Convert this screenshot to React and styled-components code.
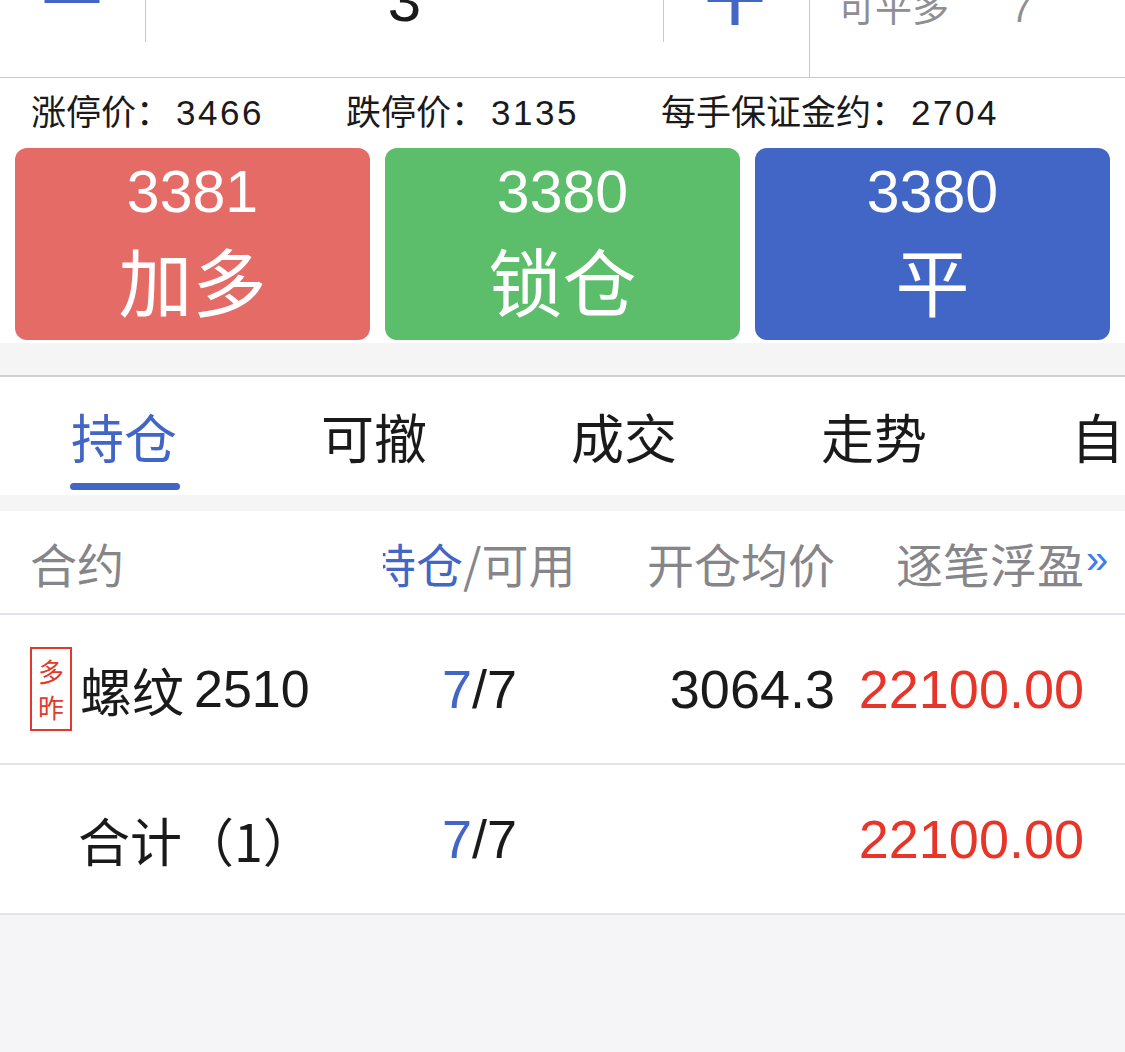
import React from "react";
import styled, { createGlobalStyle } from "styled-components";

const GlobalStyle = createGlobalStyle`
  html, body {
    margin: 0;
    padding: 0;
    background: #f5f5f7;
  }
  body {
    font-family: "Liberation Sans", "Noto Sans CJK SC", sans-serif;
    overflow: hidden;
  }
`;

const Page = styled.div`
  width: 1125px;
  height: 1052px;
  overflow: hidden;
  background: #f5f5f7;
`;

const Top = styled.div`
  background: #fff;
`;

const Stepper = styled.div`
  margin-top: -42px;
  height: 120px;
  display: flex;
  border-bottom: 1px solid #c8c8cc;
  box-sizing: border-box;
`;

const StepBtn = styled.div`
  width: 145px;
  height: 84px;
  position: relative;
  display: flex;
  align-items: center;
  justify-content: center;
`;

const Bar = styled.div`
  position: absolute;
  background: #4266c6;
  width: ${(p) => (p.vertical ? 7 : 55)}px;
  height: ${(p) => (p.vertical ? 50 : 4)}px;
  left: 50%;
  top: 50%;
  transform: translate(-50%, -50%);
  margin-top: ${(p) => p.mt || 0}px;
  margin-left: ${(p) => p.ml || 0}px;
`;

const StepValue = styled.div`
  flex: 0 0 519px;
  height: 84px;
  border-left: 1px solid #c8c8cc;
  border-right: 1px solid #c8c8cc;
  box-sizing: border-box;
  display: flex;
  align-items: center;
  justify-content: center;
  font-size: 60px;
  line-height: 1;
  color: #1a1a1a;
  padding-top: 2px;
`;

const Avail = styled.div`
  flex: 1;
  border-left: 1px solid #c8c8cc;
  display: flex;
  align-items: flex-start;
  padding: 33px 0 0 28px;
  font-size: 37px;
  line-height: 1;
  color: #8e8e93;
  gap: 62px;
`;

const InfoLine = styled.div`
  height: 62px;
  display: flex;
  align-items: center;
  padding-left: 31px;
  font-size: 35px;
  color: #1a1a1a;
`;

const InfoItem = styled.span`
  width: ${(p) => p.w}px;
  white-space: nowrap;
`;

const Num = styled.span`
  letter-spacing: 2.5px;
  margin-left: 5px;
`;

const Actions = styled.div`
  display: flex;
  gap: 15px;
  padding: 8px 15px 3px;
`;

const ActionBtn = styled.div`
  flex: 1;
  height: 192px;
  border-radius: 12px;
  background: ${(p) => p.bg};
  color: #fff;
  display: flex;
  flex-direction: column;
  align-items: center;
`;

const Price = styled.div`
  font-size: 59px;
  line-height: 1;
  margin-top: 15px;
`;

const ActionLabel = styled.div`
  font-size: 74px;
  line-height: 1;
  margin-top: 20px;
  font-family: "Noto Sans CJK SC", sans-serif;
  font-weight: 400;
`;

const Spacer = styled.div`
  height: ${(p) => p.h}px;
  background: #f5f5f5;
  border-bottom: ${(p) => (p.line ? "2px solid #d0d0d0" : "none")};
`;

const Tabs = styled.div`
  height: 118px;
  background: #fff;
  display: flex;
  padding-left: 70px;
  overflow: hidden;
`;

const Tab = styled.div`
  flex: 0 0 250px;
  display: flex;
  flex-direction: column;
  align-items: flex-start;
`;

const TabText = styled.div`
  font-family: "Noto Sans CJK SC", sans-serif;
  font-size: 53px;
  line-height: 1;
  margin-top: 33px;
  padding-left: 1px;
  color: ${(p) => (p.active ? "#4266c6" : "#1a1a1a")};
`;

const TabBar = styled.div`
  width: 110px;
  height: 7px;
  border-radius: 4px;
  background: #4266c6;
  margin-top: 20px;
`;

const Table = styled.div`
  background: #fff;
`;

const Row = styled.div`
  display: grid;
  grid-template-columns: 340px 220px 245px 249px 1fr;
  align-items: center;
  height: ${(p) => p.h}px;
  padding-left: 30px;
  border-bottom: 2px solid #e2e2ea;
  box-sizing: border-box;
`;

const HeadCell = styled.div`
  font-family: "Noto Sans CJK SC", sans-serif;
  font-size: 47px;
  color: #86868a;
  text-align: ${(p) => p.align || "left"};
  white-space: nowrap;
  margin-left: ${(p) => p.ml || 0}px;
`;

const Clip = styled.span`
  display: inline-block;
  overflow: hidden;
  vertical-align: bottom;
  width: 80px;
`;

const Shift = styled.span`
  display: inline-block;
  margin-left: -14px;
  color: #4266c6;
`;

const More = styled.div`
  color: #3b7ef0;
  font-size: 40px;
  padding-left: 2px;
  margin-top: -6px;
`;

const Cell = styled.div`
  font-size: 54px;
  color: ${(p) => p.color || "#1a1a1a"};
  white-space: nowrap;
  display: flex;
  align-items: center;
  justify-content: ${(p) => (p.align === "right" ? "flex-end" : "flex-start")};
  padding-left: ${(p) => p.pl || 0}px;
`;

const Badge = styled.div`
  width: 38px;
  height: 80px;
  border: 2px solid #e03a2f;
  color: #e03a2f;
  font-size: 26px;
  line-height: 1;
  display: flex;
  flex-direction: column;
  align-items: center;
  justify-content: center;
  gap: 10px;
  margin-right: 8px;
  font-family: "Noto Sans CJK SC", sans-serif;
`;

const Name = styled.span`
  font-family: "Noto Sans CJK SC", sans-serif;
  font-size: 52px;
`;

const Code = styled.span`
  font-size: 52px;
  margin-left: 10px;
`;

const Blue = styled.span`
  color: #4266c6;
`;

const RED = "#e8352a";

export default function App() {
  return (
    <Page>
      <GlobalStyle />
      <Top>
        <Stepper>
          <StepBtn>
            <Bar mt={1} ml={-1} />
          </StepBtn>
          <StepValue>3</StepValue>
          <StepBtn>
            <Bar ml={-2} />
            <Bar vertical ml={-2} />
          </StepBtn>
          <Avail>
            <span>可平多</span>
            <span>7</span>
          </Avail>
        </Stepper>
        <InfoLine>
          <InfoItem w={315}>
            涨停价：<Num>3466</Num>
          </InfoItem>
          <InfoItem w={315}>
            跌停价：<Num>3135</Num>
          </InfoItem>
          <InfoItem w={400}>
            每手保证金约：<Num>2704</Num>
          </InfoItem>
        </InfoLine>
        <Actions>
          <ActionBtn bg="#e56b66">
            <Price>3381</Price>
            <ActionLabel>加多</ActionLabel>
          </ActionBtn>
          <ActionBtn bg="#5cbd6b">
            <Price>3380</Price>
            <ActionLabel>锁仓</ActionLabel>
          </ActionBtn>
          <ActionBtn bg="#4266c6">
            <Price>3380</Price>
            <ActionLabel>平</ActionLabel>
          </ActionBtn>
        </Actions>
      </Top>
      <Spacer h={32} line />
      <Tabs>
        <Tab>
          <TabText active>持仓</TabText>
          <TabBar />
        </Tab>
        <Tab>
          <TabText>可撤</TabText>
        </Tab>
        <Tab>
          <TabText>成交</TabText>
        </Tab>
        <Tab>
          <TabText>走势</TabText>
        </Tab>
        <Tab>
          <TabText>自选</TabText>
        </Tab>
      </Tabs>
      <Spacer h={16} />
      <Table>
        <Row h={104}>
          <HeadCell>合约</HeadCell>
          <HeadCell ml={13}>
            <Clip>
              <Shift>持仓</Shift>
            </Clip>
            /可用
          </HeadCell>
          <HeadCell align="right">开仓均价</HeadCell>
          <HeadCell align="right">逐笔浮盈</HeadCell>
          <More>»</More>
        </Row>
        <Row h={150}>
          <Cell>
            <Badge>
              <span>多</span>
              <span>昨</span>
            </Badge>
            <Name>螺纹</Name>
            <Code>2510</Code>
          </Cell>
          <Cell pl={72}>
            <Blue>7</Blue>/7
          </Cell>
          <Cell align="right">3064.3</Cell>
          <Cell align="right" color={RED}>
            22100.00
          </Cell>
          <div />
        </Row>
        <Row h={150}>
          <Cell pl={48}>
            <Name>合计（1）</Name>
          </Cell>
          <Cell pl={72}>
            <Blue>7</Blue>/7
          </Cell>
          <Cell align="right" />
          <Cell align="right" color={RED}>
            22100.00
          </Cell>
          <div />
        </Row>
      </Table>
    </Page>
  );
}
